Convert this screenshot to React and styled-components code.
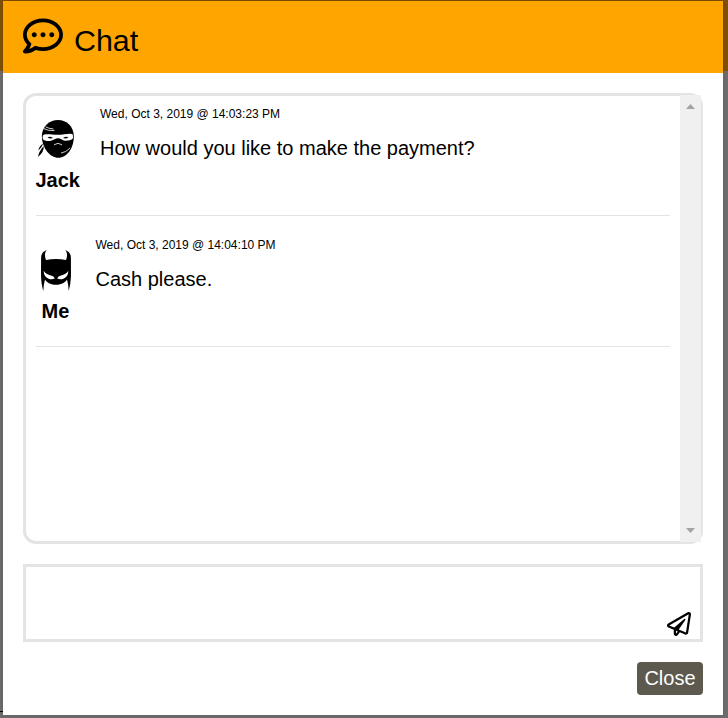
import React from 'react';
import styled, { createGlobalStyle } from 'styled-components';
import { FaRegCommentDots, FaRegPaperPlane } from 'react-icons/fa';

const GlobalStyle = createGlobalStyle`
  * { box-sizing: border-box; }
  body { margin: 0; background: #696969; font-family: "Liberation Sans", Arial, sans-serif; color: #000; }
`;

const Backdrop = styled.div`
  height: 718px;
  padding: 1px 5px 3px 3px;
  background:
    linear-gradient(#000, #000) 0 711px / 3px 1px no-repeat,
    linear-gradient(#805200, #805200) 0 0 / 100% 71px no-repeat,
    #6d6d6d;
  overflow: hidden;
`;

const Dialog = styled.section`
  display: flex;
  flex-direction: column;
  height: 714px;
  background: #fff;
  box-shadow: 0 0 5px rgba(0, 0, 0, 0.15);
`;

const Header = styled.header`
  display: flex;
  flex: none;
  height: 72px;
  padding: 15px 20px 0;
  background: #ffa500;
`;

const Title = styled.h1`
  margin: 6px 0 0 11px;
  font-size: 30.4px;
  line-height: 36px;
  font-weight: 400;
`;

const Body = styled.div`
  display: flex;
  flex-direction: column;
  flex: 1;
  padding: 20px 20px;
`;

const History = styled.div`
  display: flex;
  height: 451px;
  border: 3px solid #e4e4e4;
  border-radius: 13px;
`;

const Messages = styled.div`
  flex: 1;
  padding: 0 10px;
`;

const Row = styled.article`
  display: flex;
  gap: 19.5px;
  height: ${(p) => (p.$first ? 120 : 131)}px;
  padding-top: ${(p) => (p.$first ? 11 : 22)}px;
  border-bottom: 1px solid #e4e4e4;
`;

const Person = styled.div`
  display: flex;
  flex-direction: column;
  padding-top: 12px;
  svg { display: block; }
`;

const Name = styled.strong`
  margin: 8px 0.5px 0 -0.5px;
  font-size: 20px;
  line-height: 23px;
  text-align: center;
`;

const Time = styled.time`
  display: block;
  font-size: 12px;
  line-height: 14px;
`;

const Message = styled.p`
  margin: 15px 0 0;
  font-size: 20px;
  line-height: 24px;
`;

const ScrollTrack = styled.div`
  display: flex;
  flex-direction: column;
  justify-content: space-between;
  align-items: center;
  width: 21px;
  margin: -1px -1px -1px 0;
  padding: 9px 0;
  background: #f0f0f0;
`;

const Arrow = styled.svg`
  display: block;
  width: 9px;
  height: 5px;
  fill: #a3a3a3;
`;

const Composer = styled.div`
  display: flex;
  justify-content: flex-end;
  align-items: flex-end;
  height: 78px;
  margin-top: 20px;
  padding: 0 9px 3px;
  border: 3px solid #e4e4e4;
`;

const CloseButton = styled.button`
  align-self: flex-end;
  width: 66px;
  height: 33px;
  margin-top: 20px;
  padding: 0 0 1px;
  border: 0;
  border-radius: 4px;
  background: #5d594f;
  color: #fff;
  font: 20px/32px "Liberation Sans", Arial, sans-serif;
`;

const Ninja = () => (
  <svg width="40" height="42" viewBox="0 0 40 42">
    <path d="M5.8 17C6.2 7.5 13 1 22 1C31 1 37.5 7.5 37.8 17C38 29 31 38.8 22.2 38.8C14 38.8 6 29 5.8 17Z" />
    <path d="M6.8 16.5C8 14.3 15 15.6 22 15.8C28 15.6 35 13.5 36.8 15.5Q37.7 19 35.8 20.6C31 22.4 28 22 25.5 20.2Q22 18.2 18.5 20.2C15 22.6 10.5 22.4 7.3 20.7Q6.2 18.5 6.8 16.5Z" fill="#fff" />
    <path d="M11.5 18.5Q14 17 17 19Q14 20.2 11.5 18.5ZM27 19Q30 17 32.5 18.2Q30 20.2 27 19Z" />
    <path d="M7.5 9.5Q12 12 18.5 11.6M9.5 7.8Q13 9.7 17.5 10M18 25.8Q22 22.8 26 25.8M25 34Q30 33.5 34 29" fill="none" stroke="#fff" strokeWidth=".8" />
    <path d="M7.2 24.5Q6 28.5 2.4 31.5Q2.8 27.5 7.2 24.5ZM7.7 27Q8.2 33 2 38Q2.5 33 7.7 27Z" />
  </svg>
);

const Mask = () => (
  <svg width="40" height="42" viewBox="0 0 40 42">
    <path d="M10.6 0C6.5 2 5.1 4 5.1 8L5 26Q5.4 35 7.3 41Q7.4 35 9 29.5C11 33 15.5 34.8 20 34.8C24.5 34.8 29 33 31 29.5Q32.6 35 32.7 41Q34.6 35 35 26L34.9 8C34.9 4 33.5 2 29.4 0C31.6 3 31.3 7 30 10Q20 8 10 10C8.7 7 8.4 3 10.6 0Z" />
    <path d="M7.6 20.8Q10 24.4 15 25.5Q18 26.2 18.8 28.6Q16 30 12.5 28.8Q8 27 7.6 20.8ZM32.4 20.8Q30 24.4 25 25.5Q22 26.2 21.2 28.6Q24 30 27.5 28.8Q32 27 32.4 20.8Z" fill="#fff" />
  </svg>
);

const entries = [
  { name: 'Jack', Avatar: Ninja, time: 'Wed, Oct 3, 2019 @ 14:03:23 PM', text: 'How would you like to make the payment?' },
  { name: 'Me', Avatar: Mask, time: 'Wed, Oct 3, 2019 @ 14:04:10 PM', text: 'Cash please.' },
];

export default function App() {
  return (
    <>
      <GlobalStyle />
      <Backdrop>
        <Dialog>
          <Header>
            <FaRegCommentDots size={40} />
            <Title>Chat</Title>
          </Header>
          <Body>
            <History>
              <Messages>
                {entries.map(({ name, Avatar, time, text }, i) => (
                  <Row key={name} $first={i === 0}>
                    <Person>
                      <Avatar />
                      <Name>{name}</Name>
                    </Person>
                    <div>
                      <Time>{time}</Time>
                      <Message>{text}</Message>
                    </div>
                  </Row>
                ))}
              </Messages>
              <ScrollTrack>
                <Arrow viewBox="0 0 9 5"><path d="M0 5 4.5 0 9 5Z" /></Arrow>
                <Arrow viewBox="0 0 9 5"><path d="M0 0 4.5 5 9 0Z" /></Arrow>
              </ScrollTrack>
            </History>
            <Composer>
              <FaRegPaperPlane size={24} />
            </Composer>
            <CloseButton>Close</CloseButton>
          </Body>
        </Dialog>
      </Backdrop>
    </>
  );
}
